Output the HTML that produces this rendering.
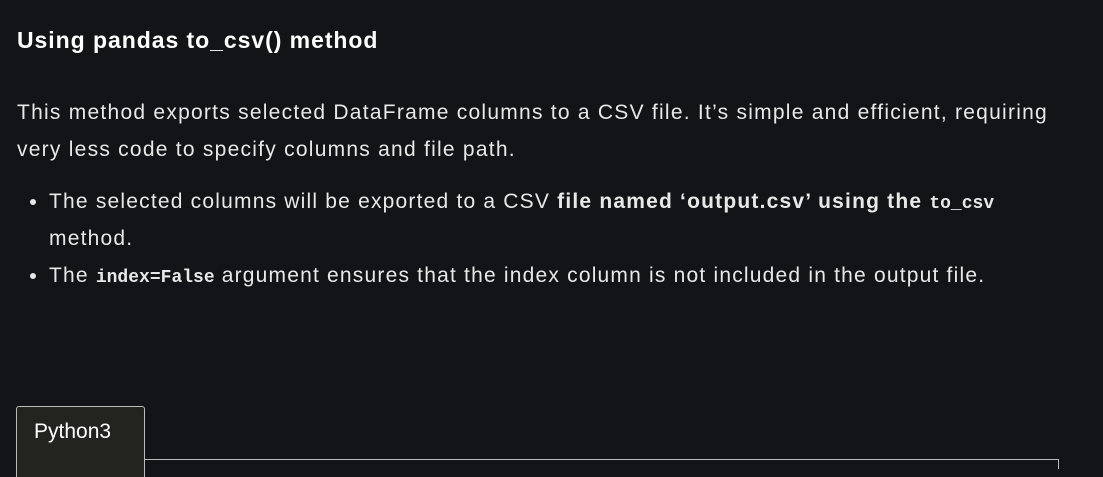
<!DOCTYPE html>
<html><head><style>
body{margin:0;background:#131417;width:1103px;height:464px;overflow:hidden;font-family:"Liberation Sans",sans-serif;color:#e8e8e8;position:relative}
h3{position:absolute;left:17px;top:25px;margin:0;font-size:23px;font-weight:bold;color:#fff;line-height:30px;letter-spacing:0.95px}
p{position:absolute;left:17px;top:94px;margin:0;font-size:21px;line-height:37px;width:1045px;letter-spacing:1.25px}
ul{position:absolute;left:17px;top:183px;margin:0;padding:0 0 0 32px;font-size:21px;line-height:37px;width:960px;letter-spacing:1.2px}
li{margin:0}
code{font-family:"Liberation Mono",monospace;font-size:18px;font-weight:bold;letter-spacing:0;line-height:1}
.tab{position:absolute;left:16px;top:406px;width:127px;height:70px;background:#232320;border:1px solid #bbb;border-bottom:none;border-radius:3px 3px 0 0;font-size:21px;color:#fff}
.tab span{position:absolute;left:17px;top:13px}
.line{position:absolute;left:144px;top:459px;width:915px;height:1px;background:#bbb}
.line2{position:absolute;left:1058px;top:459px;width:1px;height:10px;background:#bbb}
</style></head><body>
<h3>Using pandas to_csv() method</h3>
<p>This method exports selected DataFrame columns to a CSV file. It’s simple and efficient, requiring very less code to specify columns and file path.</p>
<ul>
<li>The selected columns will be exported to a CSV <b>file named ‘output.csv’ using the <code>to_csv</code></b> method.</li>
<li>The <code>index=False</code> argument ensures that the index column is not included in the output file.</li>
</ul>
<div class="tab"><span>Python3</span></div>
<div class="line"></div><div class="line2"></div>
</body></html>
